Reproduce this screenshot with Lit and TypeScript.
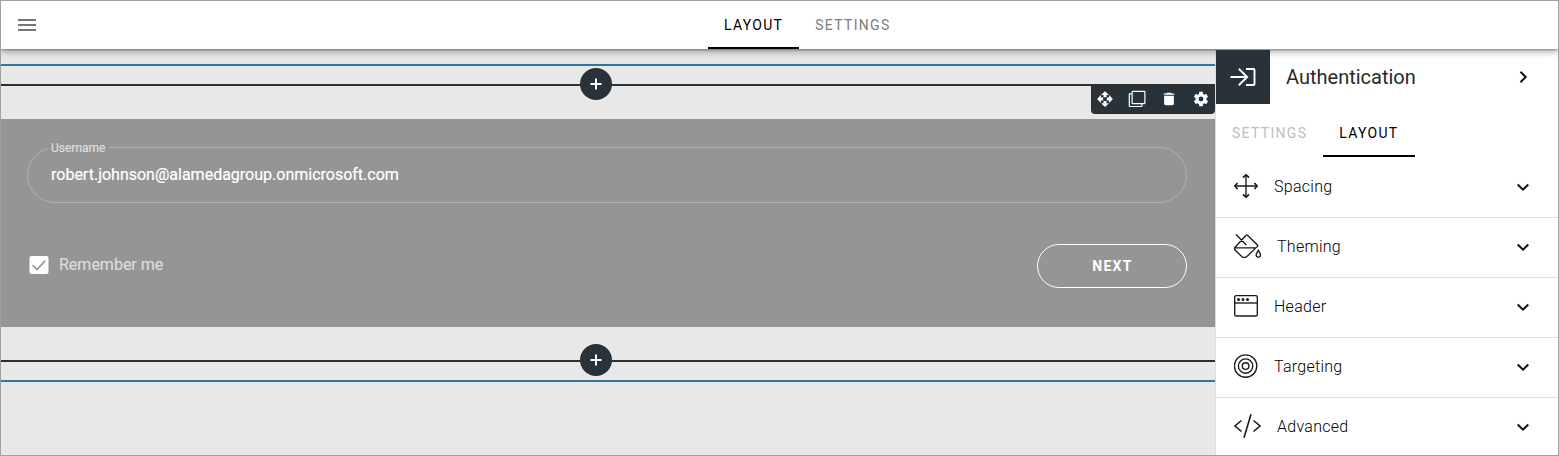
import { LitElement, html, css, svg } from "lit";
import { customElement } from "lit/decorators.js";
import { classMap } from "lit/directives/class-map.js";

const icons: Record<string, unknown> = {
  spacing: svg`<path d="M12 .8v22.400M.8 12h22.400"/><path stroke-width="1.700" d="M9 3.500 12 .9l3 2.600M9 20.500l3 2.600 3-2.600M3.500 9 .9 12l2.600 3M20.500 9l2.600 3-2.600 3"/>`,
  theming: svg`<path d="M2 .5 12.400 11M.6 13.700 12.100 1.200q.7-.7 1.400 0L23.400 11q.6.700 0 1.400L12.600 22.800q-2.300 1.400-4.600 0L1.300 16.300Q.3 15 .6 13.800H22M24.300 16.300c-1.400 2.300-2.200 3.600-2.200 4.700a2.200 2.200 0 0 0 4.400 0c0-1.100-.8-2.400-2.200-4.700z"/>`,
  header: svg`<rect x=".7" y="1.600" width="22.600" height="20.400" rx="1.500"/><path d="M.7 9h22.600"/><path class="dots" d="M4.500 5.400h.01M9 5.400h.01M13.500 5.400h.01"/>`,
  targeting: svg`<circle cx="11.600" cy="12" r="11.200"/><circle cx="11.600" cy="12" r="7.200"/><circle cx="11.600" cy="12" r="3.300"/>`,
  advanced: svg`<path stroke-width="1.600" d="M7.500 6.500.9 12l6.600 5.500M19.500 6.500l6.600 5.500-6.600 5.500M17 .3 10 23.700"/>`,
};

const sections = [
  { id: "spacing", label: "Spacing", width: 24 },
  { id: "theming", label: "Theming", width: 27 },
  { id: "header", label: "Header", width: 24 },
  { id: "targeting", label: "Targeting", width: 24 },
  { id: "advanced", label: "Advanced", width: 27 },
];

@customElement("app-root")
export class AppRoot extends LitElement {
  static styles = css`
    :host {
      display: flex;
      flex-direction: column;
      box-sizing: border-box;
      width: 100%;
      height: 456px;
      border: 1px solid #a0a0a0;
      overflow: hidden;
      background: #e8e8e8;
      font-family: Roboto, "Liberation Sans", sans-serif;
      color: #000;
    }
    svg { display: block; fill: none; stroke: currentColor; }
    .topbar {
      position: relative;
      z-index: 1;
      flex: none;
      display: grid;
      grid-template-columns: 707px auto 1fr;
      height: 48px;
      background: #fff;
      box-shadow: 0 1px 2px rgba(0,0,0,.3), 0 2px 8px rgba(0,0,0,.38);
    }
    .menu { padding: 18px 0 0 17px; color: #757575; }
    .tabs { display: flex; }
    .tab {
      box-sizing: border-box;
      height: 48px;
      padding: 0 16px;
      border-bottom: 2px solid transparent;
      font-size: 14px;
      line-height: 48px;
      letter-spacing: 1.3px;
      color: #7c7c7c;
    }
    .tab.active { color: #000; border-color: #000; }
    .body { flex: 1; display: flex; min-height: 0; }
    .canvas { flex: 1; padding-top: 15px; }
    .zone { border: solid #3178a0; border-width: 2px 0; height: 314px; }
    .insert { position: relative; height: 2px; background: #293238; }
    .insert.first { margin-top: 18px; }
    .insert.last { margin-top: 33px; }
    .plus {
      position: absolute;
      left: 579px;
      top: -16px;
      display: grid;
      place-items: center;
      width: 32px;
      height: 32px;
      border-radius: 50%;
      background: #293238;
      color: #fff;
    }
    .tools {
      position: absolute;
      right: 0;
      top: 0;
      display: flex;
      justify-content: space-between;
      align-items: center;
      box-sizing: border-box;
      width: 124px;
      height: 30px;
      padding: 0 5px 0 5px;
      border-radius: 0 0 4px 4px;
      background: #293238;
      color: #fff;
    }
    .card {
      box-sizing: border-box;
      height: 208px;
      margin-top: 33px;
      padding: 22px 28px 0 26px;
      background: #959595;
    }
    .field {
      box-sizing: border-box;
      height: 62px;
      margin: 0;
      padding: 0 0 0 20px;
      border: 1px solid #b0b0b0;
      border-radius: 28px;
      min-width: 0;
    }
    .legend {
      padding: 1px 4px 0 3px;
      height: 13px;
      box-sizing: border-box;
      font-size: 12px;
      line-height: 13px;
      color: #dedede;
      -webkit-text-stroke: .2px #dedede;
    }
    .value { margin-left: 3px; padding-top: 11px; font-size: 16px; line-height: 19px; color: #fff; -webkit-text-stroke: .2px #fff; }
    .actions { display: flex; justify-content: space-between; padding-top: 41px; }
    .remember { display: flex; gap: 10px; padding-left: 2px; font-size: 16px; line-height: 42px; color: #dcdcdc; -webkit-text-stroke: .2px #dcdcdc; }
    .check { align-self: flex-start; margin-top: 12px; width: 20px; height: 18px; }
    .next {
      box-sizing: border-box;
      width: 150px;
      height: 44px;
      padding: 0 0 0 1px;
      border: 1px solid #fff;
      border-radius: 22px;
      background: none;
      color: #fff;
      font: 700 14px/42px Roboto, "Liberation Sans", sans-serif;
      letter-spacing: 1.25px;
    }
    .panel {
      flex: none;
      box-sizing: border-box;
      width: 343px;
      border-left: 1px solid #dcdcdc;
      background: #fff;
      padding-top: 1px;
    }
    .title { display: flex; align-items: center; height: 54px; font-size: 20px; }
    .badge {
      position: relative;
      z-index: 2;
      display: grid;
      place-items: center;
      width: 54px;
      height: 54px;
      margin-right: 16px;
      background: #293238;
      color: #fff;
    }
    .name { flex: 1; color: #2a2a2a; }
    .chev { margin-right: 27px; color: #111; }
    .panel .tabs { height: 54px; padding-top: 5px; box-sizing: border-box; }
    .panel .tab { line-height: 49px; }
    .panel .tab:not(.active) { color: #bdbdbd; }
    .row { display: flex; align-items: center; box-sizing: border-box; height: 60px; padding: 0 0 2px 18px; border-bottom: 1px solid #dedede; }
    .row .lead { margin: 0 16px 1px 0; color: #1a1a1a; stroke-width: 1.35; }
    .row .label { flex: 1; font-size: 16px; font-weight: 300; letter-spacing: .27px; color: #000; }
    .dots { stroke-width: 3; stroke-linecap: round; }
  `;

  private chevron(down: boolean) {
    return html`<svg class="chev" width="16" height="16" viewBox="0 0 16 16" stroke-width="2">
      <path d=${down ? "M2.700 5.500 8 10.700l5.300-5.200" : "M5.500 2.700 10.700 8l-5.200 5.300"}></path>
    </svg>`;
  }

  private tab(label: string, active: boolean) {
    return html`<div class=${classMap({ tab: true, active })}>${label}</div>`;
  }

  private plus() {
    return html`<div class="plus"><svg width="12" height="12" stroke-width="2"><path d="M6 .5v11M.5 6h11"></path></svg></div>`;
  }

  private toolbar() {
    return html`<div class="tools">
      <svg width="18" height="18" viewBox="0 0 24 24"><path fill="currentColor" stroke="none" d="M12 1.500l5.200 5h-3.200v3h-4V6.500H6.800zM12 22.500l-5.200-5h3.200v-3h4v3h3.200zM1.500 12l5-5.200v3.200h3v4H6.500v3.200zM22.500 12l-5 5.200v-3.200h-3v-4h3V6.800z"></path></svg>
      <svg width="18" height="18" viewBox="0 0 18 18" stroke-width="1.200"><rect x="4.100" y="1.300" width="12.800" height="12.300" rx=".6"></rect><path d="M4 3.900H1.800q-.5 0-.5.500v11.600q0 .5.500.5h11.600q.5 0 .5-.5v-2"></path></svg>
      <svg width="18" height="18" viewBox="0 0 24 24"><path fill="currentColor" stroke="none" d="M5.500 7.500h13V18c0 1.400-.9 2.300-2.300 2.300H7.800c-1.400 0-2.300-.9-2.300-2.300zM15.800 4.500 14.800 3.500H9.200l-1 1H5v1.700h14V4.500z"></path></svg>
      <svg width="18" height="18" viewBox="0 0 24 24"><path fill="currentColor" stroke="none" d="M19.140 12.940c.04-.3.060-.61.060-.94 0-.32-.02-.64-.07-.94l2.030-1.580c.18-.14.230-.41.120-.61l-1.920-3.320c-.12-.22-.37-.29-.59-.22l-2.390.96c-.5-.38-1.030-.7-1.620-.94l-.36-2.540c-.04-.24-.24-.41-.48-.41h-3.840c-.24 0-.43.170-.47.410l-.36 2.540c-.59.240-1.130.570-1.620.940l-2.390-.96c-.22-.08-.47 0-.59.220L2.740 8.870c-.12.210-.08.470.12.610l2.030 1.580c-.05.300-.09.630-.09.940s.02.640.070.940l-2.030 1.580c-.18.140-.23.410-.12.610l1.920 3.320c.12.220.37.290.59.220l2.390-.96c.5.380 1.030.7 1.620.94l.36 2.540c.05.240.24.410.48.410h3.840c.24 0 .44-.17.470-.41l.36-2.540c.59-.24 1.130-.56 1.620-.94l2.390.96c.22.080.47 0 .59-.22l1.920-3.320c.12-.22.070-.47-.12-.61zM12 15.200A3.200 3.200 0 1 1 12 8.800a3.200 3.200 0 0 1 0 6.400z"></path></svg>
    </div>`;
  }

  render() {
    return html`
      <header class="topbar">
        <div class="menu"><svg width="18" height="12" stroke-width="2"><path d="M0 1h18M0 6h18M0 11h18"></path></svg></div>
        <nav class="tabs">${this.tab("LAYOUT", true)}${this.tab("SETTINGS", false)}</nav>
      </header>
      <div class="body">
        <main class="canvas">
          <div class="zone">
            <div class="insert first">${this.plus()}${this.toolbar()}</div>
            <section class="card">
              <fieldset class="field">
                <legend class="legend">Username</legend>
                <div class="value">robert.johnson@alamedagroup.onmicrosoft.com</div>
              </fieldset>
              <div class="actions">
                <div class="remember">
                  <svg class="check" viewBox="0 0 20 18"><rect x=".5" width="19" height="18" rx="2" fill="#fff" stroke="none"></rect><path d="M3.500 9.200 8 13.400 16.200 4.800" stroke="#8c8c8c" stroke-width="1.500"></path></svg>
                  <span>Remember me</span>
                </div>
                <button class="next">NEXT</button>
              </div>
            </section>
            <div class="insert last">${this.plus()}</div>
          </div>
        </main>
        <aside class="panel">
          <div class="title">
            <div class="badge"><svg width="26" height="20" viewBox="0 0 26 20" stroke-width="1.900"><path d="M.5 10H17M8.800 1.800 17.200 10l-8.400 8.200M16 2h7.500q1 0 1 1v14q0 1-1 1H16"></path></svg></div>
            <div class="name">Authentication</div>
            ${this.chevron(false)}
          </div>
          <nav class="tabs">${this.tab("SETTINGS", false)}${this.tab("LAYOUT", true)}</nav>
          ${sections.map((s) => html`<div class="row">
            <svg class="lead" width=${s.width} height="24">${icons[s.id]}</svg>
            <span class="label">${s.label}</span>
            ${this.chevron(true)}
          </div>`)}
        </aside>
      </div>
    `;
  }
}
